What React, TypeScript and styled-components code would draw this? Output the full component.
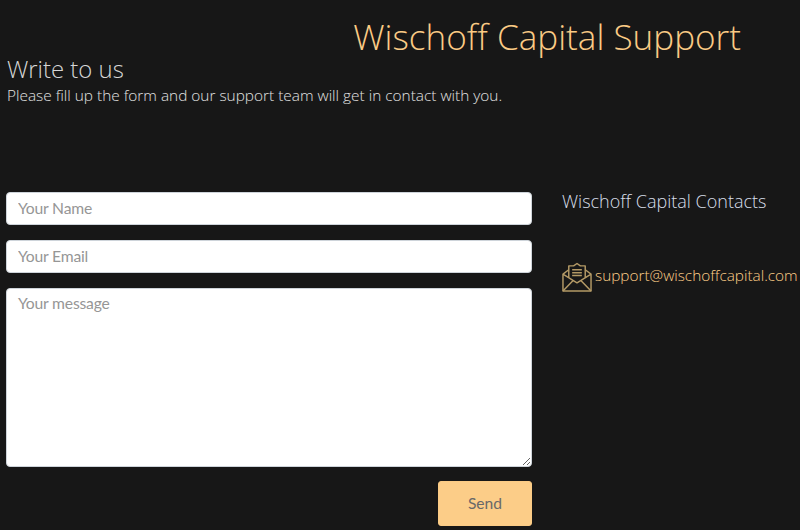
import React from "react";
import styled, { createGlobalStyle } from "styled-components";

const Global = createGlobalStyle`
  html, body { margin: 0; padding: 0; background: #171717; }
  body { font-family: "Open Sans", "Noto Sans", sans-serif; overflow: hidden; }
  * { box-sizing: border-box; }
`;
const Page = styled.div`
  width: 800px;
  height: 530px;
  background: #171717;
  display: flex;
  flex-direction: column;
  overflow: hidden;
`;
const Title = styled.h1`
  margin: 0;
  padding: 12px 59px 0 0;
  height: 52px;
  font-size: 35.1px;
  line-height: 48px;
  font-weight: 300;
  color: #fbcb85;
  text-align: right;
  white-space: nowrap;
`;
const Intro = styled.header`
  padding: 0 0 0 7px;
  height: 140px;
`;
const Heading = styled.h2`
  margin: 0;
  font-size: 23.9px;
  line-height: 33px;
  font-weight: 300;
  color: #d6d6d6;
`;
const Lead = styled.p`
  margin: 0;
  padding-top: 1px;
  font-size: 15.4px;
  line-height: 20px;
  font-weight: 300;
  color: #e2e2e2;
  white-space: nowrap;
`;
const Main = styled.main`
  display: flex;
  padding-left: 6px;
`;
const Form = styled.form`
  width: 526px;
  display: flex;
  flex-direction: column;
`;
const Field = styled.input`
  width: 100%;
  height: 33px;
  margin-bottom: 15px;
  padding: 0 11px 2px;
  border: 1px solid #ced4da;
  border-radius: 4px;
  background: #fff;
  font: 400 15.7px "Lato", sans-serif;
  letter-spacing: -0.2px;
  &::placeholder { color: #969696; opacity: 1; }
`;
const Message = styled.textarea`
  width: 100%;
  height: 179px;
  margin: 0 0 14px;
  padding: 5px 11px;
  border: 1px solid #ced4da;
  border-radius: 4px;
  background: #fff;
  font: 400 15.7px "Lato", sans-serif;
  letter-spacing: -0.2px;
  display: block;
  &::placeholder { color: #969696; opacity: 1; }
`;
const Actions = styled.div`
  display: flex;
  justify-content: flex-end;
`;
const Send = styled.button`
  width: 94px;
  height: 45px;
  padding: 0 0 2px;
  border: 1px solid #fbcb85;
  border-radius: 3px;
  background: #fccd88;
  color: #686868;
  font: 400 15.6px "Lato", sans-serif;
`;
const Aside = styled.aside`
  margin-left: 30px;
  display: flex;
  flex-direction: column;
  flex: 1;
  min-width: 0;
`;
const ContactsTitle = styled.h3`
  margin: 0;
  height: 70px;
  font-size: 18px;
  line-height: 18px;
  font-weight: 300;
  color: #d8dfea;
  white-space: nowrap;
`;
const Contact = styled.a`
  display: flex;
  align-items: center;
  gap: 3px;
  color: #ffcf88;
  white-space: nowrap;
`;
const Address = styled.span`
  font-size: 15.35px;
  line-height: 21px;
  font-weight: 300;
  margin-bottom: 4px;
`;
const MailIcon = () => (
  <svg width="30" height="31" viewBox="0 0 31 31" fill="none" stroke="#b49a66" strokeWidth="1.5" strokeLinejoin="round" style={{ flex: "none" }}>
    <path d="M1 12 L7 7.5 M24 7.5 L30 12 V29.5 H1 V12 L15.5 21 L30 12" />
    <path d="M1 29.5 L11.5 18.5 M30 29.5 L19.5 18.5" />
    <path d="M7 15.5 V3.5 H12 L15.5 1 L19 3.5 H24 V15.5" />
    <path d="M10.5 7.5 H20.5 M10.5 10.5 H20.5 M10.5 13.5 H20.5" strokeWidth="1.6" />
  </svg>
);

export default function App() {
  return (
    <Page>
      <Global />
      <Title>Wischoff Capital Support</Title>
      <Intro>
        <Heading>Write to us</Heading>
        <Lead>Please fill up the form and our support team will get in contact with you.</Lead>
      </Intro>
      <Main>
        <Form onSubmit={(e) => e.preventDefault()}>
          <Field placeholder="Your Name" />
          <Field placeholder="Your Email" />
          <Message placeholder="Your message" />
          <Actions>
            <Send type="submit">Send</Send>
          </Actions>
        </Form>
        <Aside>
          <ContactsTitle>Wischoff Capital Contacts</ContactsTitle>
          <Contact><MailIcon /><Address>support@wischoffcapital.com</Address></Contact>
        </Aside>
      </Main>
    </Page>
  );
}
